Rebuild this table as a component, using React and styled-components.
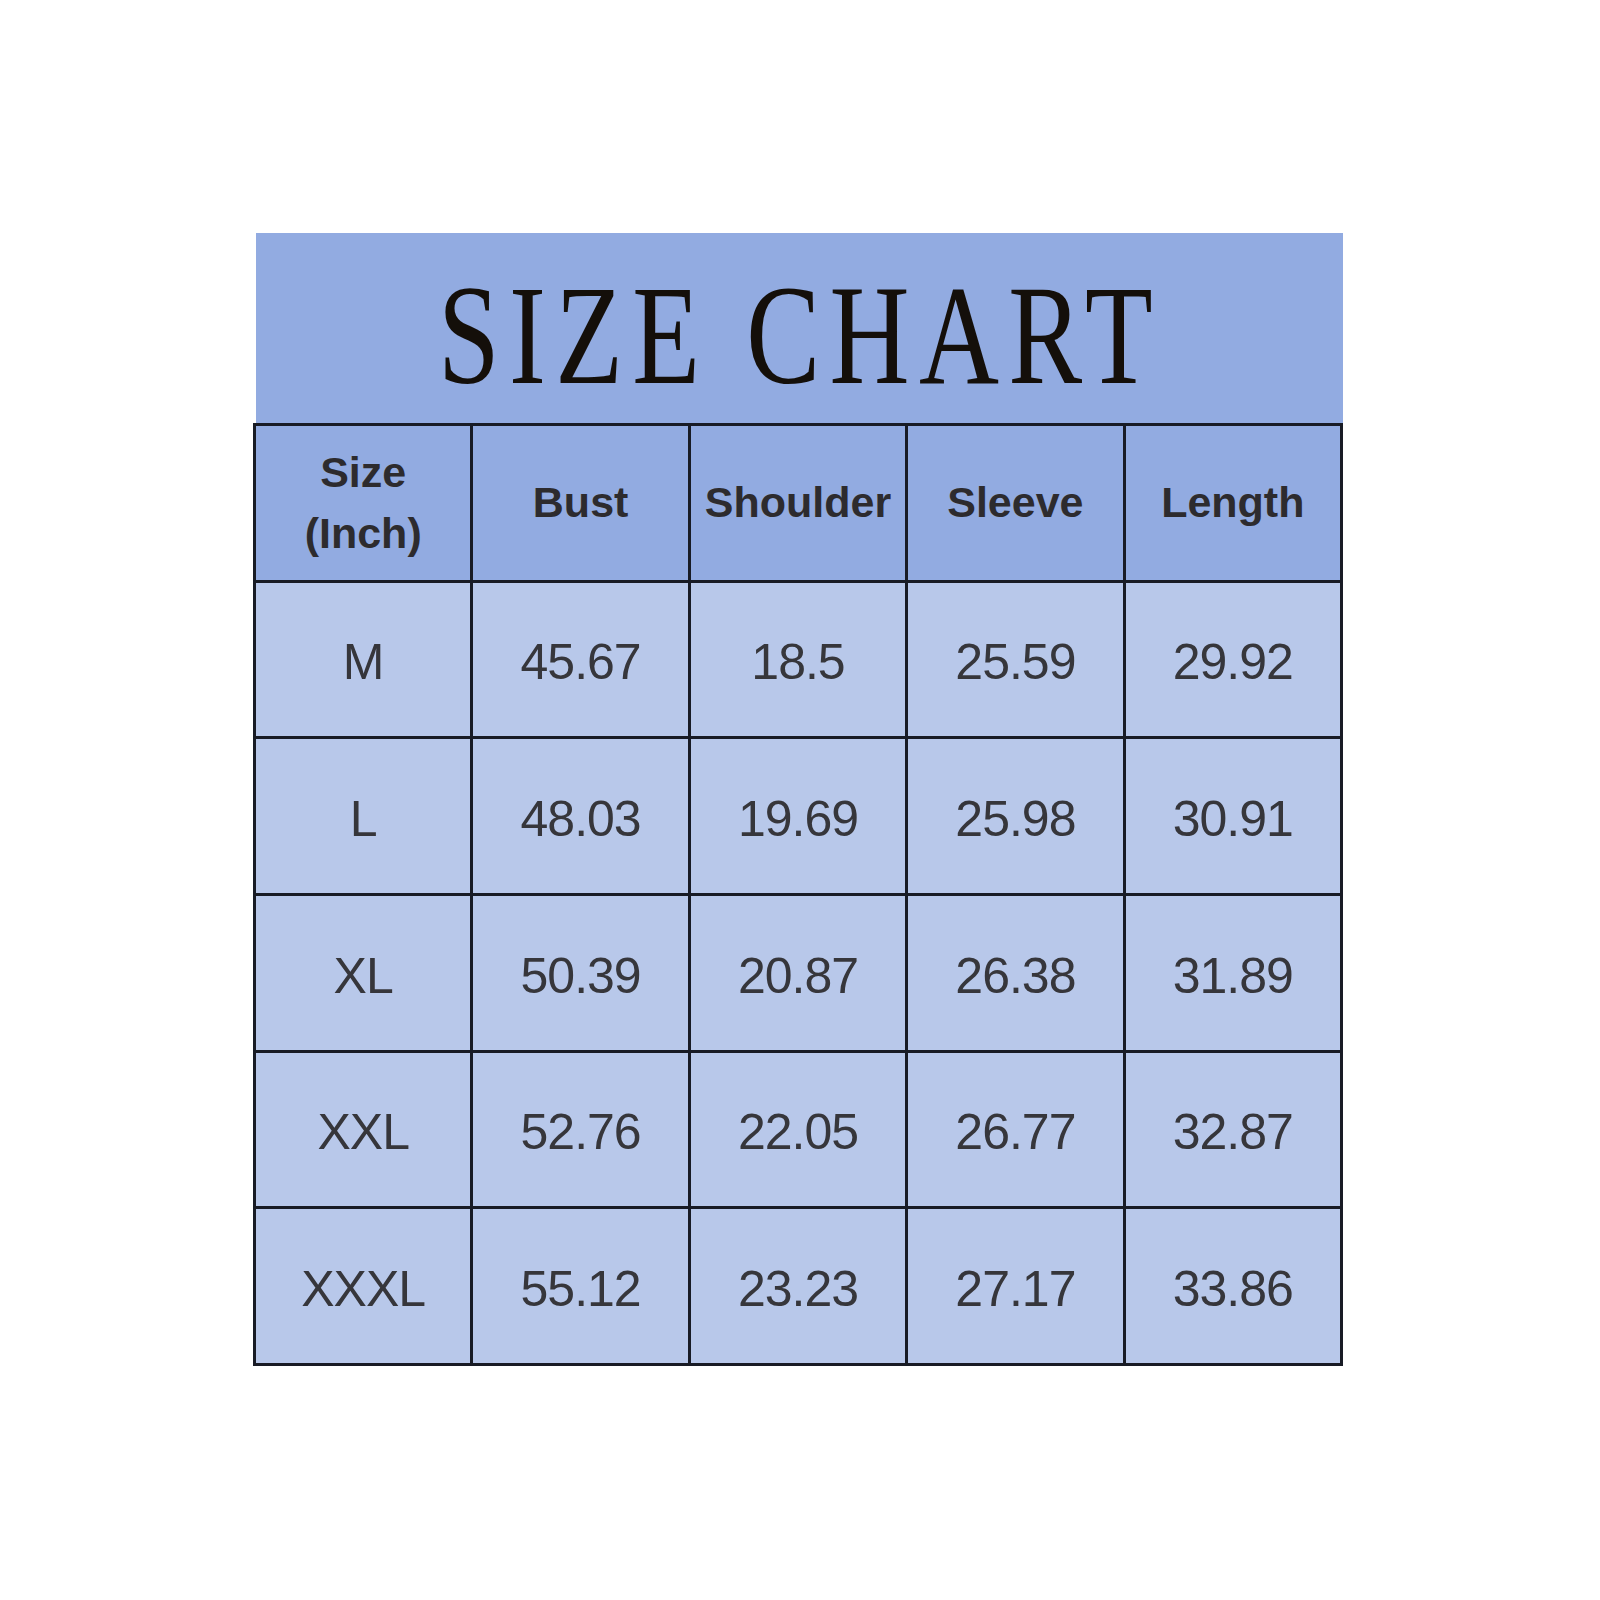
import React from 'react';
import styled, { createGlobalStyle } from 'styled-components';

const GlobalStyle = createGlobalStyle`
  html, body {
    margin: 0;
    padding: 0;
    background: #ffffff;
  }
  body {
    width: 1600px;
    height: 1600px;
  }
`;

const Page = styled.div`
  width: 1600px;
  height: 1600px;
  box-sizing: border-box;
  padding: 233px 0 0 253px;
`;

const Chart = styled.div`
  width: 1090px;
  display: flex;
  flex-direction: column;
`;

const Banner = styled.div`
  margin-left: 3px;
  height: 190px;
  box-sizing: border-box;
  padding-top: 31px;
  background: #92abe1;
  display: flex;
  justify-content: center;
  overflow: hidden;
`;

const Title = styled.h1`
  margin: 0;
  font-family: "Liberation Serif", "Times New Roman", serif;
  font-weight: normal;
  font-size: 142px;
  line-height: 142px;
  letter-spacing: 12px;
  color: #140f0a;
  white-space: pre;
  transform: scaleX(0.78);
  transform-origin: center;
`;

const Grid = styled.div`
  display: grid;
  grid-template-columns: repeat(5, 1fr);
  grid-auto-rows: 156.67px;
  border-left: 3px solid #181b25;
  border-top: 3px solid #181b25;
`;

const Cell = styled.div`
  box-sizing: border-box;
  border-right: 3px solid #181b25;
  border-bottom: 3px solid #181b25;
  background: ${p => (p.head ? '#92abe1' : '#b8c8ea')};
  display: flex;
  align-items: center;
  justify-content: center;
  text-align: center;
  font-family: "Liberation Sans", Arial, sans-serif;
  font-weight: ${p => (p.head ? 700 : 400)};
  font-size: ${p => (p.head ? '43px' : '50px')};
  line-height: ${p => (p.head ? '61px' : '1')};
  letter-spacing: ${p => (p.head ? '0' : '-1px')};
  color: ${p => (p.head ? '#2d2b2e' : '#36363b')};
  padding-top: ${p => (p.head ? '0' : '6px')};
`;

const headers = ['Size\n(Inch)', 'Bust', 'Shoulder', 'Sleeve', 'Length'];

const rows = [
  ['M', '45.67', '18.5', '25.59', '29.92'],
  ['L', '48.03', '19.69', '25.98', '30.91'],
  ['XL', '50.39', '20.87', '26.38', '31.89'],
  ['XXL', '52.76', '22.05', '26.77', '32.87'],
  ['XXXL', '55.12', '23.23', '27.17', '33.86'],
];

function HeadLabel({ text }) {
  const lines = text.split('\n');
  return (
    <span>
      {lines.map((l, i) => (
        <React.Fragment key={i}>
          {i > 0 && <br />}
          {l}
        </React.Fragment>
      ))}
    </span>
  );
}

export default function App() {
  return (
    <>
      <GlobalStyle />
      <Page>
        <Chart>
          <Banner>
            <Title>SIZE CHART</Title>
          </Banner>
          <Grid>
            {headers.map(h => (
              <Cell head key={h}>
                <HeadLabel text={h} />
              </Cell>
            ))}
            {rows.map(r =>
              r.map((v, i) => <Cell key={r[0] + i}>{v}</Cell>)
            )}
          </Grid>
        </Chart>
      </Page>
    </>
  );
}
